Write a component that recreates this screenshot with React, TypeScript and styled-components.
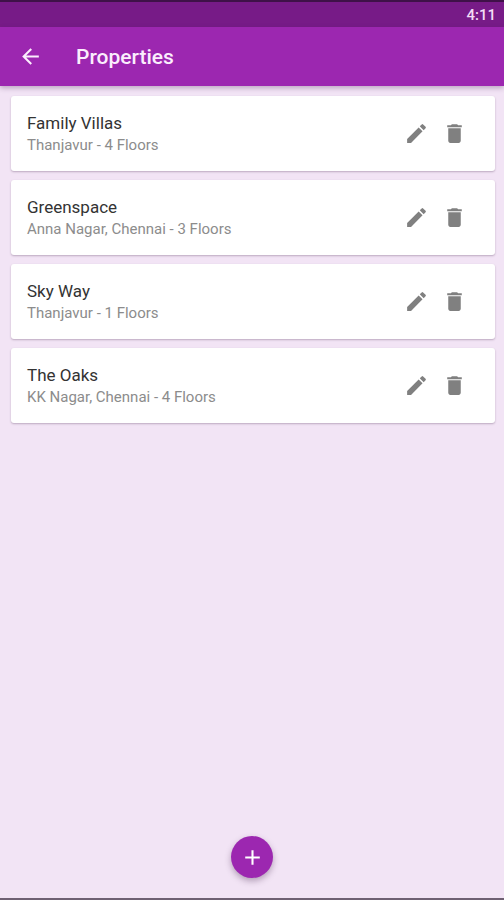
import React from 'react';
import styled, { createGlobalStyle } from 'styled-components';

const GlobalStyle = createGlobalStyle`
  * { box-sizing: border-box; }
  body {
    margin: 0;
    background: #f2e4f5;
    font-family: Roboto, "Liberation Sans", sans-serif;
  }
`;

const Screen = styled.div`
  min-height: 100vh;
  display: flex;
  flex-direction: column;
  background: #f2e4f5;
  border-bottom: 2px solid #6f6072;
`;

const StatusBar = styled.div`
  height: 27px;
  display: flex;
  align-items: center;
  justify-content: flex-end;
  padding: 0 8px;
  border-top: 2px solid #3f1148;
  background: #771b87;
  color: #f3dcf6;
  font-size: 15px;
  line-height: 20px;
  font-weight: 500;
`;

const AppBar = styled.header`
  height: 59px;
  display: flex;
  align-items: center;
  gap: 26px;
  padding: 0 10px;
  background: #9c27b0;
  color: #fbeefd;
  box-shadow: 0 2px 5px rgba(70, 30, 80, 0.32);
  z-index: 1;
`;

const Heading = styled.h1`
  margin: 0;
  font-size: 21px;
  line-height: 28px;
  font-weight: 500;
`;

const IconButton = styled.button`
  width: 40px;
  height: 40px;
  display: flex;
  align-items: center;
  justify-content: center;
  padding: 0;
  border: 0;
  border-radius: 50%;
  background: none;
  color: inherit;
  cursor: pointer;
`;

const List = styled.ul`
  flex: 1;
  display: flex;
  flex-direction: column;
  gap: 9px;
  margin: 0;
  padding: 10px 9px 10px 11px;
  list-style: none;
`;

const Card = styled.li`
  height: 75px;
  display: flex;
  align-items: center;
  justify-content: space-between;
  padding: 0 22px 0 16px;
  border-radius: 3px;
  background: #fff;
  box-shadow: 0 1px 2px rgba(60, 30, 70, 0.3);
`;

const Name = styled.h2`
  margin: 0;
  color: #333;
  font-size: 17px;
  line-height: 22px;
  font-weight: 400;
`;

const Details = styled.p`
  margin: 0;
  color: #8c8c8c;
  font-size: 15px;
  line-height: 22px;
`;

const Actions = styled.div`
  display: flex;
  color: #808080;
  ${IconButton} { width: 38px; }
`;

const Footer = styled.footer`
  display: flex;
  justify-content: center;
  padding: 0 0 20px;
`;

const AddButton = styled(IconButton)`
  width: 42px;
  height: 42px;
  background: #9c27b0;
  color: #fff;
  box-shadow: 0 3px 6px rgba(60, 30, 70, 0.35);
`;

const paths = {
  back: 'M20 11H7.83l5.59-5.59L12 4l-8 8 8 8 1.41-1.41L7.83 13H20v-2z',
  edit: 'M3 17.25V21h3.75L17.81 9.94l-3.75-3.75L3 17.25zM20.71 7.04a1 1 0 0 0 0-1.41l-2.34-2.34a1 1 0 0 0-1.41 0l-1.83 1.83 3.75 3.75 1.83-1.83z',
  trash: 'M6 19c0 1.1.9 2 2 2h8c1.1 0 2-.9 2-2V7H6v12zM19 4h-3.5l-1-1h-5l-1 1H5v2h14V4z',
  add: 'M19 13h-6v6h-2v-6H5v-2h6V5h2v6h6v2z',
};

function Icon({ name, size = 25 }: { name: keyof typeof paths; size?: number }) {
  return (
    <svg width={size} height={size} viewBox="0 0 24 24" fill="currentColor" aria-hidden="true">
      <path d={paths[name]} />
    </svg>
  );
}

const properties = [
  { name: 'Family Villas', place: 'Thanjavur', floors: 4 },
  { name: 'Greenspace', place: 'Anna Nagar, Chennai', floors: 3 },
  { name: 'Sky Way', place: 'Thanjavur', floors: 1 },
  { name: 'The Oaks', place: 'KK Nagar, Chennai', floors: 4 },
];

export default function App() {
  return (
    <Screen>
      <GlobalStyle />
      <StatusBar>4:11</StatusBar>
      <AppBar>
        <IconButton type="button" aria-label="Back"><Icon name="back" /></IconButton>
        <Heading>Properties</Heading>
      </AppBar>
      <List>
        {properties.map(({ name, place, floors }) => (
          <Card key={name}>
            <div>
              <Name>{name}</Name>
              <Details>{`${place} - ${floors} Floors`}</Details>
            </div>
            <Actions>
              <IconButton type="button" aria-label={`Edit ${name}`}><Icon name="edit" /></IconButton>
              <IconButton type="button" aria-label={`Delete ${name}`}><Icon name="trash" /></IconButton>
            </Actions>
          </Card>
        ))}
      </List>
      <Footer>
        <AddButton type="button" aria-label="Add property"><Icon name="add" size={25} /></AddButton>
      </Footer>
    </Screen>
  );
}
